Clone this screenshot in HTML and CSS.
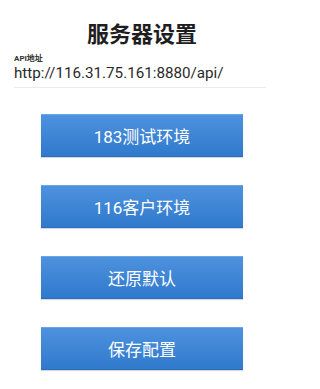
FILE: index.html
```html
<!DOCTYPE html>
<html lang="zh">
<head>
<meta charset="utf-8">
<link rel="stylesheet" href="styles.css">
</head>
<body>
<div class="page">
  <h1 class="title">服务器设置</h1>
  <div class="field">
    <div class="label">API地址</div>
    <div class="input">http://116.31.75.161:8880/api/</div>
  </div>
  <div class="buttons">
    <button class="btn">183测试环境</button>
    <button class="btn">116客户环境</button>
    <button class="btn">还原默认</button>
    <button class="btn">保存配置</button>
  </div>
</div>
</body>
</html>
```
FILE: styles.css
```css
html, body {
  margin: 0;
  padding: 0;
  background: #ffffff;
}
body {
  font-family: Roboto, "Noto Sans CJK SC", sans-serif;
  color: #222;
}
.page {
  width: 284px;
  height: 389px;
  display: flex;
  flex-direction: column;
}
.title {
  margin: 22px 0 0 0;
  font-size: 22px;
  line-height: 26px;
  font-weight: bold;
  text-align: center;
  color: #1e1e1e;
}
.field {
  margin: 6px 18px 0 14px;
  border-bottom: 1px solid #ececec;
  padding-bottom: 5px;
}
.label {
  font-size: 8px;
  line-height: 9px;
  font-weight: bold;
  color: #333;
}
.input {
  margin-top: 1px;
  font-size: 15.2px;
  line-height: 18px;
  color: #2a2a2a;
}
.buttons {
  margin-top: 26px;
  display: flex;
  flex-direction: column;
  align-items: center;
  gap: 28px;
}
.btn {
  width: 202px;
  height: 43px;
  border: none;
  border-top: 1px solid #6aa5e6;
  border-bottom: 1px solid #2a6cbd;
  background: linear-gradient(#4d92de, #3079cc);
  color: #fff;
  font-family: Roboto, "Noto Sans CJK SC", sans-serif;
  font-size: 17px;
  padding: 0;
  box-shadow: 0 1px 1px rgba(0,0,0,0.15);
}
```
